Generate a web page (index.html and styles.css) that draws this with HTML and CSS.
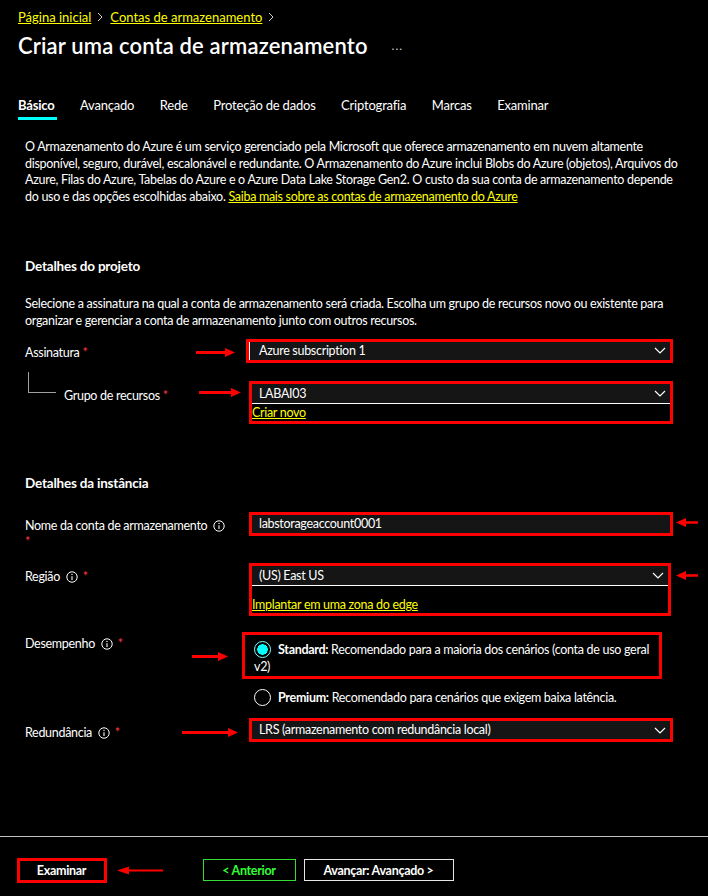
FILE: index.html
```html
<!DOCTYPE html>
<html lang="pt-BR">
<head>
<meta charset="utf-8">
<title>Criar uma conta de armazenamento</title>
<link rel="stylesheet" href="styles.css">
</head>
<body>
<header class="header">
  <nav class="crumbs">
    <a class="crumb" href="#">Página inicial</a>
    <svg class="crumb-sep" width="6" height="10" viewBox="0 0 6 10"><path d="M1 1l4 4-4 4" fill="none" stroke="#cfcfcf" stroke-width="1"/></svg>
    <a class="crumb" href="#">Contas de armazenamento</a>
    <svg class="crumb-sep" width="6" height="10" viewBox="0 0 6 10"><path d="M1 1l4 4-4 4" fill="none" stroke="#cfcfcf" stroke-width="1"/></svg>
  </nav>
  <div class="title-row">
    <h1 class="title">Criar uma conta de armazenamento</h1>
    <span class="more">...</span>
  </div>
  <nav class="tabs">
    <span class="tab tab-active">Básico</span>
    <span class="tab">Avançado</span>
    <span class="tab">Rede</span>
    <span class="tab">Proteção de dados</span>
    <span class="tab">Criptografia</span>
    <span class="tab">Marcas</span>
    <span class="tab">Examinar</span>
  </nav>
</header>

<main class="content">
  <p class="intro">O Armazenamento do Azure é um serviço gerenciado pela Microsoft que oferece armazenamento em nuvem altamente disponível, seguro, durável, escalonável e redundante. O Armazenamento do Azure inclui Blobs do Azure (objetos), Arquivos do Azure, Filas do Azure, Tabelas do Azure e o Azure Data Lake Storage Gen2. O custo da sua conta de armazenamento depende do uso e das opções escolhidas abaixo. <a href="#">Saiba mais sobre as contas de armazenamento do Azure</a></p>

  <h2 class="section section-project">Detalhes do projeto</h2>
  <p class="desc">Selecione a assinatura na qual a conta de armazenamento será criada. Escolha um grupo de recursos novo ou existente para organizar e gerenciar a conta de armazenamento junto com outros recursos.</p>

  <div class="row row-sub">
    <div class="label">
      <span class="label-text lt-sub">Assinatura <span class="req">*</span></span>
      <svg class="arrow arrow-sub" width="39" height="9" viewBox="0 0 39 9"><path d="M0 3H29V0L39 4.5L29 9V6H0Z" fill="#ff0000"/></svg>
    </div>
    <div class="mark mark-sub">
      <div class="select select-focus select-sub"><span>Azure subscription 1</span><svg class="chev" width="12" height="7" viewBox="0 0 12 7"><path d="M1 1l5 5 5-5" fill="none" stroke="#fff" stroke-width="1.2"/></svg></div>
    </div>
  </div>

  <div class="row row-rg">
    <div class="label">
      <span class="tree"></span>
      <span class="label-text lt-rg">Grupo de recursos <span class="req">*</span></span>
      <svg class="arrow arrow-rg" width="42" height="9" viewBox="0 0 42 9"><path d="M0 3H32V0L42 4.5L32 9V6H0Z" fill="#ff0000"/></svg>
    </div>
    <div class="mark">
      <div class="select select-line"><span>LABAI03</span><svg class="chev" width="12" height="7" viewBox="0 0 12 7"><path d="M1 1l5 5 5-5" fill="none" stroke="#fff" stroke-width="1.2"/></svg></div>
      <a class="sublink sublink-rg" href="#">Criar novo</a>
    </div>
  </div>

  <h2 class="section section-instance">Detalhes da instância</h2>

  <div class="row row-name">
    <div class="label">
      <span class="label-text lt-name">Nome da conta de armazenamento <svg class="info" width="12" height="12" viewBox="0 0 12 12"><circle cx="6" cy="6" r="5.2" fill="none" stroke="#fff" stroke-width="1"/><path d="M6 5.2v3.8" stroke="#fff" stroke-width="1.1"/><circle cx="6" cy="3.4" r="0.7" fill="#fff"/></svg> <span class="req">*</span></span>
    </div>
    <div class="mark">
      <div class="input">labstorageaccount0001</div>
    </div>
    <svg class="arrow-back arrow-name" width="22" height="9" viewBox="0 0 22 9"><path d="M22 3.2H10V0L0 4.5L10 9V5.8H22Z" fill="#ff0000"/></svg>
  </div>

  <div class="row row-region">
    <div class="label">
      <span class="label-text lt-region">Região <svg class="info" width="12" height="12" viewBox="0 0 12 12"><circle cx="6" cy="6" r="5.2" fill="none" stroke="#fff" stroke-width="1"/><path d="M6 5.2v3.8" stroke="#fff" stroke-width="1.1"/><circle cx="6" cy="3.4" r="0.7" fill="#fff"/></svg> <span class="req">*</span></span>
    </div>
    <div class="mark mark-region">
      <div class="select select-line"><span>(US) East US</span><svg class="chev" width="12" height="7" viewBox="0 0 12 7"><path d="M1 1l5 5 5-5" fill="none" stroke="#fff" stroke-width="1.2"/></svg></div>
      <a class="sublink sublink-region" href="#">Implantar em uma zona do edge</a>
    </div>
    <svg class="arrow-back arrow-region" width="22" height="9" viewBox="0 0 22 9"><path d="M22 3.2H10V0L0 4.5L10 9V5.8H22Z" fill="#ff0000"/></svg>
  </div>

  <div class="row row-perf">
    <div class="label">
      <span class="label-text lt-perf">Desempenho <svg class="info" width="12" height="12" viewBox="0 0 12 12"><circle cx="6" cy="6" r="5.2" fill="none" stroke="#fff" stroke-width="1"/><path d="M6 5.2v3.8" stroke="#fff" stroke-width="1.1"/><circle cx="6" cy="3.4" r="0.7" fill="#fff"/></svg> <span class="req">*</span></span>
      <svg class="arrow arrow-perf" width="36" height="9" viewBox="0 0 36 9"><path d="M0 3H26V0L36 4.5L26 9V6H0Z" fill="#ff0000"/></svg>
    </div>
    <div class="options">
      <div class="mark mark-std">
        <p class="option option-std"><span class="radio radio-on"></span><b>Standard:</b> Recomendado para a maioria dos cenários (conta de uso geral v2)</p>
      </div>
      <p class="option option-premium"><span class="radio"></span><b>Premium:</b> Recomendado para cenários que exigem baixa latência.</p>
    </div>
  </div>

  <div class="row row-red">
    <div class="label">
      <span class="label-text lt-red">Redundância <svg class="info" width="12" height="12" viewBox="0 0 12 12"><circle cx="6" cy="6" r="5.2" fill="none" stroke="#fff" stroke-width="1"/><path d="M6 5.2v3.8" stroke="#fff" stroke-width="1.1"/><circle cx="6" cy="3.4" r="0.7" fill="#fff"/></svg> <span class="req">*</span></span>
      <svg class="arrow arrow-red" width="56" height="9" viewBox="0 0 56 9"><path d="M0 3H46V0L56 4.5L46 9V6H0Z" fill="#ff0000"/></svg>
    </div>
    <div class="mark">
      <div class="select select-plain"><span>LRS (armazenamento com redundância local)</span><svg class="chev" width="12" height="7" viewBox="0 0 12 7"><path d="M1 1l5 5 5-5" fill="none" stroke="#fff" stroke-width="1.2"/></svg></div>
    </div>
  </div>
</main>

<footer class="footer">
  <button class="btn btn-review" type="button">Examinar</button>
  <svg class="arrow-review" width="46" height="9" viewBox="0 0 46 9"><path d="M46 3.5H12V0.5L0 4.5L12 8.5V5.5H46Z" fill="#ff0000"/></svg>
  <button class="btn btn-prev" type="button">&lt; Anterior</button>
  <button class="btn btn-next" type="button">Avançar: Avançado &gt;</button>
</footer>
</body>
</html>
```

FILE: styles.css
```css
* { box-sizing: border-box; }

html, body {
  margin: 0;
  padding: 0;
}

body {
  width: 708px;
  height: 896px;
  overflow: hidden;
  background: #000;
  color: #fff;
  font-family: Lato, "Liberation Sans", sans-serif;
  font-size: 12.5px;
  letter-spacing: -0.3px;
  line-height: 16px;
}

a {
  color: #ffff00;
  text-decoration: underline;
}

/* header */
.header {
  padding: 8px 0 0 18px;
}

.crumbs {
  display: flex;
  align-items: center;
  height: 18px;
  font-size: 13px;
  letter-spacing: 0;
  line-height: 18px;
}

.crumb-sep {
  display: block;
  margin: 0 7px 0 6px;
}

.title-row {
  display: flex;
  align-items: center;
  height: 28px;
  margin-top: 6px;
}

.title {
  margin: 0;
  font-size: 22px;
  font-weight: 600;
  letter-spacing: 0.15px;
  line-height: 28px;
}

.more {
  margin-left: 24px;
  color: #d0d0d0;
  font-size: 12px;
  letter-spacing: 1px;
}

.tabs {
  display: flex;
  gap: 25.5px;
  margin-top: 36px;
  font-size: 13px;
  letter-spacing: -0.2px;
}

.tab {
  line-height: 18px;
  padding-bottom: 3px;
  border-bottom: 3px solid transparent;
}

.tab-active {
  font-weight: 700;
  padding-right: 2px;
  margin-right: -2px;
  border-bottom-color: #00ffff;
}

/* content */
.content {
  padding-left: 25px;
}

.intro {
  margin: 19px 0 0;
  padding-right: 23px;
  line-height: 16.5px;
}

.section {
  margin: 0;
  font-size: 13.5px;
  font-weight: 700;
  letter-spacing: -0.2px;
  line-height: 18px;
}

.section-project { margin-top: 52px; }
.section-instance { margin-top: 49.5px; }

.desc {
  margin: 20px 0 0;
  padding-right: 23px;
  line-height: 17px;
}

.row {
  display: grid;
  grid-template-columns: 224px 424px 1fr;
  align-items: start;
}

.row-sub { margin-top: 9.5px; }
.row-rg { margin-top: 18.5px; }
.row-name { margin-top: 20.5px; }
.row-region { margin-top: 13.5px; }
.row-perf { margin-top: 15.5px; }
.row-red { margin-top: 11.5px; }

.label {
  display: flex;
  align-items: flex-start;
}

.label-text {
  line-height: 16px;
}

.lt-sub { padding-top: 6px; }
.lt-rg { padding-top: 7px; margin-left: 8px; }
.lt-name { padding-top: 5.5px; width: 206px; }
.lt-region { padding-top: 6px; }
.lt-perf { padding-top: 4px; }
.lt-red { padding-top: 6.5px; }

.req {
  color: #ff3b3b;
}

.info {
  vertical-align: -2px;
  margin: 0 2px 0 3px;
}

.tree {
  width: 28px;
  height: 21px;
  margin: -9.5px 0 0 3px;
  border-left: 1px solid #a0a0a0;
  border-bottom: 1px solid #a0a0a0;
  flex: none;
}

.arrow {
  display: block;
  flex: none;
  margin-left: auto;
}

.arrow-sub { margin-top: 9px; margin-right: 14px; }
.arrow-rg { margin-top: 6.5px; margin-right: 8px; }
.arrow-perf { margin-top: 20px; margin-right: 21px; }
.arrow-red { margin-top: 10px; margin-right: 11px; }

.arrow-back {
  display: block;
  margin-left: 3px;
}

.arrow-name { margin-top: 5.5px; }
.arrow-region { margin-top: 8px; }

/* red annotation frames */
.mark {
  border: 3px solid #ff0000;
}

.mark-sub { margin-left: -3px; }
.mark-region { margin-right: 2px; }

.select {
  display: flex;
  align-items: center;
  justify-content: space-between;
  height: 18px;
  background: #151515;
  padding: 0 4px 0 7px;
}

.select-focus {
  border-left: 1px solid #fff;
  padding-left: 9px;
}

.select-line {
  height: 20px;
  border-bottom: 1px solid #fff;
}

.chev {
  display: block;
  flex: none;
}

.input {
  height: 18px;
  line-height: 18px;
  background: #151515;
  padding-left: 7px;
}

.sublink {
  display: block;
  width: max-content;
  line-height: 16px;
}

.sublink-rg { padding-top: 1px; }
.sublink-region { padding-top: 11px; }

/* performance options */
.options {
  display: flex;
  flex-direction: column;
}

.mark-std {
  margin: 0 11px 0 -7.5px;
}

.option {
  margin: 0;
  line-height: 17.5px;
}

.option b { font-weight: 700; }

.option-std {
  padding: 6px 2px 0 9.5px;
}

.option-premium {
  margin-top: 10.5px;
  padding-left: 5px;
}

.radio {
  display: inline-block;
  width: 17px;
  height: 17px;
  margin-right: 7px;
  border: 1px solid #ffffff;
  border-radius: 50%;
  vertical-align: -4px;
}

.radio-on {
  border-color: #7fffff;
  background: radial-gradient(circle, #00ffff 0 5px, #000 5.5px);
}

/* footer */
.footer {
  display: flex;
  align-items: center;
  margin-top: 93.5px;
  border-top: 1px solid #c0c0c0;
  padding: 21px 0 0 16.5px;
}

.btn {
  font-family: inherit;
  font-size: 12.5px;
  font-weight: 700;
  letter-spacing: -0.3px;
  color: #fff;
  background: #000;
  padding: 0;
  text-align: center;
  cursor: pointer;
}

.btn-review {
  width: 90px;
  height: 25px;
  border: 3px solid #ff0000;
}

.arrow-review {
  display: block;
  margin-left: 10px;
}

.btn-prev {
  width: 93px;
  height: 21.5px;
  margin-left: 40px;
  border: 1px solid #33dd33;
  color: #33ff33;
}

.btn-next {
  width: 150px;
  height: 21.5px;
  margin-left: 8px;
  border: 1px solid #e6e6e6;
}
```
